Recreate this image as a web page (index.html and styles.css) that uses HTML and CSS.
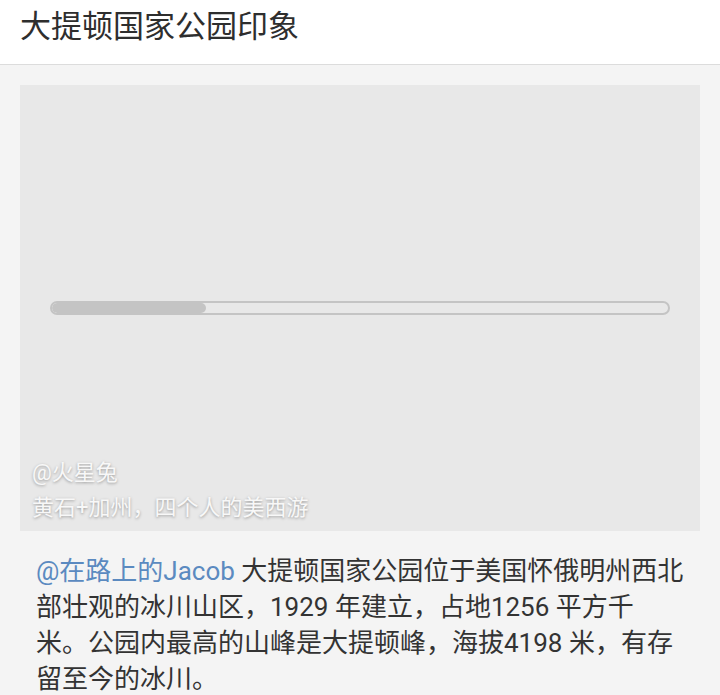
FILE: index.html
```html
<!DOCTYPE html>
<html lang="zh-CN">
<head>
    <meta charset="UTF-8">
    <meta name="viewport" content="width=device-width, initial-scale=1.0">
    <title>大提顿国家公园印象</title>
    <link rel="stylesheet" href="styles.css">
</head>
<body>
    <header class="topbar">
        <h1 class="title">大提顿国家公园印象</h1>
    </header>
    <main class="content">
        <div class="photo">
            <div class="loader">
                <div class="loader-fill" style="width: 25%;"></div>
            </div>
            <div class="caption">
                <div class="caption-line">@火星兔</div>
                <div class="caption-line">黄石+加州，四个人的美西游</div>
            </div>
        </div>
        <p class="post">
            <a class="author" href="#">@在路上的Jacob</a> 大提顿国家公园位于美国怀俄明州西北<br>部壮观的冰川山区，1929 年建立，占地1256 平方千<br>米。公园内最高的山峰是大提顿峰，海拔4198 米，有存<br>留至今的冰川。
        </p>
    </main>
</body>
</html>
```

FILE: styles.css
```css
body {
    margin: 0;
    background: #f4f4f4;
    font-family: Roboto, "Noto Sans CJK SC", sans-serif;
    color: #333;
}

.topbar {
    background: #fff;
    height: 64px;
    border-bottom: 1px solid #dcdcdc;
    display: flex;
    align-items: center;
    padding: 0 20px;
}

.title {
    margin: 0;
    font-size: 31px;
    font-weight: normal;
    color: #2e2e2e;
    margin-top: -18px;
}

.content {
    padding: 20px 20px 0;
}

.photo {
    background: #e8e8e8;
    height: 446px;
    position: relative;
    display: flex;
    flex-direction: column;
    align-items: center;
}

.loader {
    margin-top: 216px;
    width: 620px;
    height: 14px;
    box-sizing: border-box;
    border: 2px solid #c4c4c4;
    border-radius: 7px;
    overflow: hidden;
}

.loader-fill {
    height: 100%;
    background: #c4c4c4;
    border-radius: 6px;
}

.caption {
    position: absolute;
    left: 12px;
    bottom: 6px;
    color: #f8f8f8;
    font-size: 22px;
    line-height: 35px;
    text-shadow: 0 1px 3px rgba(0, 0, 0, 0.35);
}

.post {
    margin: 22px 0 0;
    padding: 0 8px 0 16px;
    font-size: 26px;
    line-height: 36px;
    white-space: nowrap;
}

.author {
    color: #5b8ac0;
    text-decoration: none;
}
```
